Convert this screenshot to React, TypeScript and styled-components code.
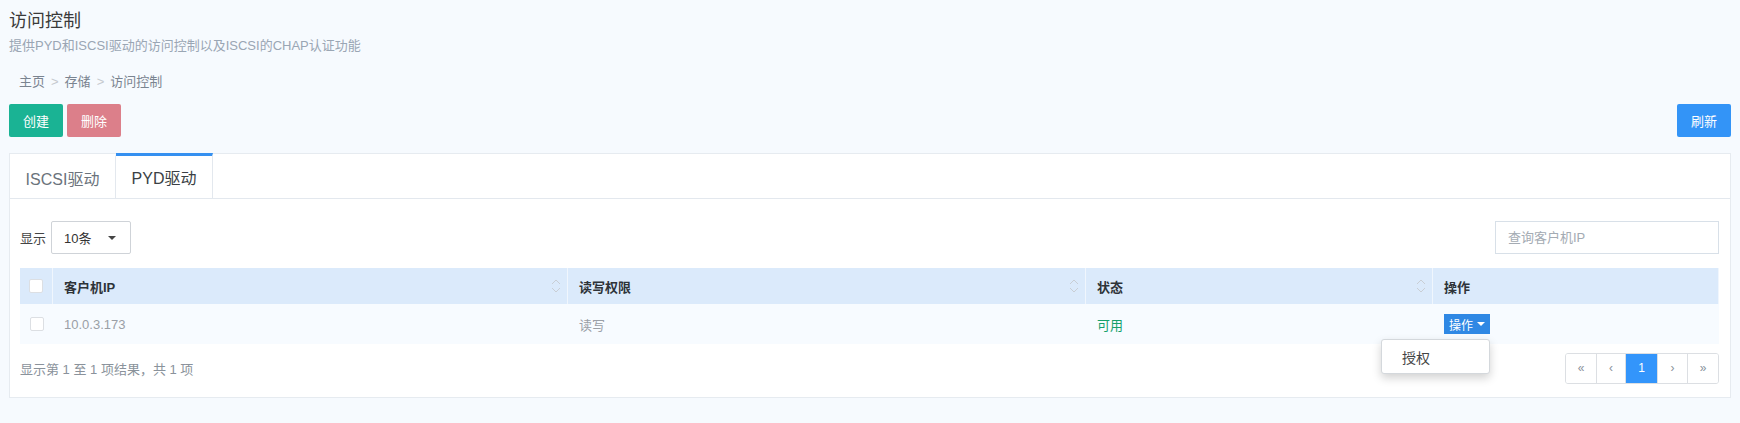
import React from "react";
import styled, { createGlobalStyle } from "styled-components";

const GlobalStyle = createGlobalStyle`
  html, body {
    margin: 0;
    padding: 0;
    background: #f6fafe;
    font-family: "Liberation Sans", "Noto Sans CJK SC", Arial, sans-serif;
    color: #333;
  }
  * { box-sizing: border-box; }
`;

const Page = styled.div`
  padding: 9px 9px 0 9px;
  width: 1740px;
`;

const Title = styled.h1`
  margin: 0;
  font-size: 18px;
  line-height: 24px;
  font-weight: normal;
  color: #3a3a3a;
`;

const Subtitle = styled.p`
  margin: 4px 0 0 0;
  font-size: 13px;
  line-height: 18px;
  color: #9aa6b4;
`;

const Breadcrumb = styled.nav`
  margin: 18px 0 0 0;
  padding-left: 10px;
  display: flex;
  gap: 6px;
  font-size: 13px;
  line-height: 18px;
  color: #7a8490;
`;

const Sep = styled.span`
  color: #c5c9ce;
`;

const Toolbar = styled.div`
  margin-top: 13px;
  display: flex;
  align-items: center;
  gap: 4px;
`;

const Btn = styled.button<{ $bg: string }>`
  height: 33px;
  width: 54px;
  border: none;
  border-radius: 2px;
  background: ${(p) => p.$bg};
  color: #fff;
  font-family: inherit;
  font-size: 13px;
  padding: 0;
  cursor: pointer;
`;

const Spacer = styled.div`
  flex: 1;
`;

const Panel = styled.section`
  margin-top: 16px;
  background: #fff;
  border: 1px solid #e6ebf0;
  width: 1722px;
`;

const TabBar = styled.div`
  display: flex;
  height: 45px;
  border-bottom: 1px solid #e3e8ee;
`;

const Tab = styled.div<{ $active?: boolean; $w: number }>`
  width: ${(p) => p.$w}px;
  height: ${(p) => (p.$active ? "45px" : "44px")};
  display: flex;
  align-items: center;
  justify-content: center;
  font-size: 16px;
  color: ${(p) => (p.$active ? "#3a3f45" : "#6b737c")};
  background: #fff;
  border-right: 1px solid #e3e8ee;
  border-top: 3px solid ${(p) => (p.$active ? "#3590f0" : "transparent")};
  margin-top: ${(p) => (p.$active ? "-1px" : "0")};
  position: relative;
  z-index: ${(p) => (p.$active ? 1 : 0)};
`;

const Body = styled.div`
  padding: 22px 11px 14px 10px;
`;

const Controls = styled.div`
  display: flex;
  align-items: center;
  height: 33px;
`;

const Label = styled.span`
  font-size: 13px;
  color: #444;
  margin-right: 5px;
`;

const Select = styled.div`
  width: 80px;
  height: 33px;
  border: 1px solid #cfd3d8;
  border-radius: 2px;
  display: flex;
  align-items: center;
  justify-content: space-between;
  padding: 0 14px 0 12px;
  font-size: 13px;
  color: #333;
`;

const Caret = styled.span<{ $color: string; $size: number }>`
  width: 0;
  height: 0;
  border-left: ${(p) => p.$size}px solid transparent;
  border-right: ${(p) => p.$size}px solid transparent;
  border-top: ${(p) => p.$size}px solid ${(p) => p.$color};
`;

const Search = styled.input`
  margin-left: auto;
  width: 224px;
  height: 33px;
  border: 1px solid #d8e0e8;
  padding: 0 12px;
  font-family: inherit;
  font-size: 13px;
  color: #333;
  outline: none;
  &::placeholder {
    color: #a4abb3;
  }
`;

const Table = styled.div`
  margin-top: 14px;
  display: grid;
  grid-template-columns: 33px 515px 518px 347px 1fr;
`;

const HeadCell = styled.div<{ $center?: boolean }>`
  height: 36px;
  background: #dbeafb;
  display: flex;
  align-items: center;
  justify-content: ${(p) => (p.$center ? "center" : "space-between")};
  padding: ${(p) => (p.$center ? "0" : "0 6px 0 11px")};
  font-size: 13px;
  font-weight: bold;
  color: #2e3338;
  border-right: 1px solid #f0f6fd;
  &:last-child {
    border-right: none;
  }
`;

const Cell = styled.div<{ $center?: boolean; $color?: string }>`
  height: 40px;
  background: #f7fbff;
  display: flex;
  align-items: center;
  justify-content: ${(p) => (p.$center ? "center" : "flex-start")};
  padding: ${(p) => (p.$center ? "0" : "0 10px 0 11px")};
  font-size: 13px;
  color: ${(p) => p.$color || "#9a9fa6"};
  position: relative;
`;

const Check = styled.span`
  width: 14px;
  height: 14px;
  background: #fff;
  border: 1px solid #dcdfe3;
  border-radius: 2px;
`;

const OpButton = styled.button`
  height: 20px;
  padding: 0 5px 0 5px;
  border: none;
  background: #2f88e4;
  color: #fff;
  font-family: inherit;
  font-size: 12px;
  display: flex;
  align-items: center;
  gap: 4px;
  cursor: pointer;
`;

const OpWrap = styled.div`
  position: relative;
`;

const Menu = styled.div`
  position: absolute;
  top: 25px;
  right: 0;
  width: 109px;
  height: 35px;
  background: #fff;
  border: 1px solid #d4d8dc;
  border-radius: 3px;
  box-shadow: 0 4px 10px rgba(0, 0, 0, 0.18);
  display: flex;
  align-items: center;
  padding-left: 20px;
  font-size: 14px;
  font-weight: normal;
  color: #444;
  z-index: 5;
`;

const Footer = styled.div`
  margin-top: 9px;
  display: flex;
  align-items: center;
  justify-content: space-between;
  height: 30px;
`;

const Info = styled.span`
  font-size: 13px;
  color: #8a929b;
`;

const Pager = styled.div`
  display: flex;
  border: 1px solid #dcdfe3;
  border-radius: 3px;
  overflow: hidden;
  height: 31px;
`;

const PageItem = styled.div<{ $active?: boolean; $w: number }>`
  width: ${(p) => p.$w}px;
  display: flex;
  align-items: center;
  justify-content: center;
  font-size: 12px;
  background: ${(p) => (p.$active ? "#3395fb" : "#fff")};
  color: ${(p) => (p.$active ? "#fff" : "#8a929b")};
  border-right: 1px solid #dcdfe3;
  &:last-child {
    border-right: none;
  }
`;

const SortIcon = () => (
  <svg width="10" height="16" viewBox="0 0 10 16" fill="none">
    <path d="M1 6 L5 2 L9 6" stroke="#c9ced4" strokeWidth="1" />
    <path d="M1 10 L5 14 L9 10" stroke="#c9ced4" strokeWidth="1" />
  </svg>
);

export default function App() {
  return (
    <>
      <GlobalStyle />
      <Page>
        <Title>访问控制</Title>
        <Subtitle>提供PYD和ISCSI驱动的访问控制以及ISCSI的CHAP认证功能</Subtitle>
        <Breadcrumb>
          <span>主页</span>
          <Sep>&gt;</Sep>
          <span>存储</span>
          <Sep>&gt;</Sep>
          <span>访问控制</span>
        </Breadcrumb>
        <Toolbar>
          <Btn $bg="#1ab394">创建</Btn>
          <Btn $bg="#dc7f8a">删除</Btn>
          <Spacer />
          <Btn $bg="#3394f7">刷新</Btn>
        </Toolbar>
        <Panel>
          <TabBar>
            <Tab $w={106}>ISCSI驱动</Tab>
            <Tab $w={97} $active>
              PYD驱动
            </Tab>
          </TabBar>
          <Body>
            <Controls>
              <Label>显示</Label>
              <Select>
                <span>10条</span>
                <Caret $color="#444" $size={4} />
              </Select>
              <Search placeholder="查询客户机IP" />
            </Controls>
            <Table>
              <HeadCell $center>
                <Check />
              </HeadCell>
              <HeadCell>
                <span>客户机IP</span>
                <SortIcon />
              </HeadCell>
              <HeadCell>
                <span>读写权限</span>
                <SortIcon />
              </HeadCell>
              <HeadCell>
                <span>状态</span>
                <SortIcon />
              </HeadCell>
              <HeadCell>
                <span>操作</span>
              </HeadCell>

              <Cell $center>
                <Check />
              </Cell>
              <Cell>10.0.3.173</Cell>
              <Cell>读写</Cell>
              <Cell $color="#14a06b">可用</Cell>
              <Cell>
                <OpWrap>
                  <OpButton>
                    操作
                    <Caret $color="#fff" $size={4} />
                  </OpButton>
                  <Menu>授权</Menu>
                </OpWrap>
              </Cell>
            </Table>
            <Footer>
              <Info>显示第 1 至 1 项结果，共 1 项</Info>
              <Pager>
                <PageItem $w={31}>«</PageItem>
                <PageItem $w={29}>‹</PageItem>
                <PageItem $w={32} $active>
                  1
                </PageItem>
                <PageItem $w={30}>›</PageItem>
                <PageItem $w={30}>»</PageItem>
              </Pager>
            </Footer>
          </Body>
        </Panel>
      </Page>
    </>
  );
}
